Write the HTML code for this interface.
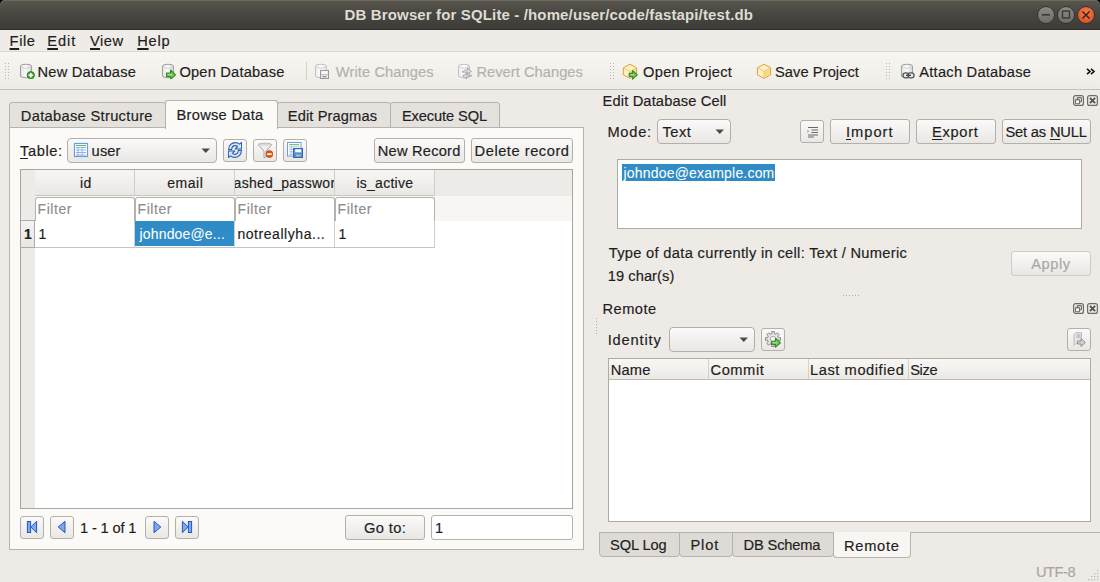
<!DOCTYPE html><html><head><meta charset="utf-8"><style>
html,body{margin:0;padding:0;width:1100px;height:582px;overflow:hidden;background:#eeebe7;}
body{position:relative;font-family:"Liberation Sans",sans-serif;color:#1e1e1e;}
.t{position:absolute;white-space:pre;line-height:15px;letter-spacing:0.35px;-webkit-text-stroke:0.18px currentColor;}
.u{text-decoration:underline;text-decoration-thickness:1.2px;text-underline-offset:2px;}
.um{text-decoration:underline;text-decoration-thickness:1.8px;text-underline-offset:1.5px;}
.btn{position:absolute;box-sizing:border-box;border:1px solid #b3b0ab;border-radius:3px;background:linear-gradient(#fbfaf9,#e9e7e4);}

</style></head><body>
<div style="position:absolute;left:0px;top:0px;width:1100px;height:30px;background:#000"></div>
<div style="position:absolute;left:0px;top:0px;width:1100px;height:30px;background:linear-gradient(#5a574e,#4a4843 40%,#3c3b37);border-radius:5px 5px 0 0;box-shadow:inset 0 1px 0 #6c695f"></div>
<div style="position:absolute;left:0px;top:29px;width:1100px;height:1px;background:#2c2b28"></div>
<div class="t" style="left:344.60px;top:7.39px;font-size:15px;letter-spacing:0.137px;font-weight:bold;color:#dfdbd2;-webkit-text-stroke:0">DB Browser for SQLite - /home/user/code/fastapi/test.db</div>
<div style="position:absolute;left:1037px;top:6px;width:16px;height:16px;border:1px solid #33322e;border-radius:50%;background:linear-gradient(#8b8983,#6f6d67)"></div>
<div style="position:absolute;left:1057px;top:6px;width:16px;height:16px;border:1px solid #33322e;border-radius:50%;background:linear-gradient(#8b8983,#6f6d67)"></div>
<div style="position:absolute;left:1077px;top:6px;width:16px;height:16px;border:1px solid #33322e;border-radius:50%;background:radial-gradient(circle at 50% 35%,#f57a4f,#e5552a 70%,#d94c20)"></div>
<svg style="position:absolute;left:0;top:0" width="1100" height="30"><rect x="1042" y="14" width="8" height="1.6" fill="#3a3935"/><rect x="1062.5" y="11" width="7" height="7" fill="none" stroke="#3a3935" stroke-width="1.4"/><path d="M1082.5 11.5 L1089.5 18.5 M1089.5 11.5 L1082.5 18.5" stroke="#2a2a20" stroke-width="1.5"/></svg>
<div style="position:absolute;left:0px;top:30px;width:1100px;height:21px;background:#efece8"></div>
<div style="position:absolute;left:0px;top:51px;width:1100px;height:1px;background:#dcd9d4"></div>
<div class="t" style="left:9.60px;top:33.95px;font-size:14.67px;letter-spacing:0.600px;"><span class="um">F</span>ile</div>
<div class="t" style="left:47.30px;top:33.95px;font-size:14.67px;letter-spacing:0.900px;"><span class="um">E</span>dit</div>
<div class="t" style="left:90.00px;top:33.95px;font-size:14.67px;letter-spacing:0.533px;"><span class="um">V</span>iew</div>
<div class="t" style="left:137.30px;top:33.95px;font-size:14.67px;letter-spacing:0.700px;"><span class="um">H</span>elp</div>
<div style="position:absolute;left:0px;top:52px;width:1100px;height:37px;background:linear-gradient(#f8f6f2,#efece7)"></div>
<div style="position:absolute;left:0px;top:89px;width:1100px;height:1px;background:#c3c0bb"></div>
<svg style="position:absolute;left:0;top:0" width="1100" height="90"><rect x="5" y="63" width="1" height="1" fill="#b9b6b0"/><rect x="8" y="63" width="1" height="1" fill="#b9b6b0"/><rect x="5" y="66" width="1" height="1" fill="#b9b6b0"/><rect x="8" y="66" width="1" height="1" fill="#b9b6b0"/><rect x="5" y="69" width="1" height="1" fill="#b9b6b0"/><rect x="8" y="69" width="1" height="1" fill="#b9b6b0"/><rect x="5" y="72" width="1" height="1" fill="#b9b6b0"/><rect x="8" y="72" width="1" height="1" fill="#b9b6b0"/><rect x="5" y="75" width="1" height="1" fill="#b9b6b0"/><rect x="8" y="75" width="1" height="1" fill="#b9b6b0"/><rect x="5" y="78" width="1" height="1" fill="#b9b6b0"/><rect x="8" y="78" width="1" height="1" fill="#b9b6b0"/><rect x="610" y="63" width="1" height="1" fill="#b9b6b0"/><rect x="613" y="63" width="1" height="1" fill="#b9b6b0"/><rect x="610" y="66" width="1" height="1" fill="#b9b6b0"/><rect x="613" y="66" width="1" height="1" fill="#b9b6b0"/><rect x="610" y="69" width="1" height="1" fill="#b9b6b0"/><rect x="613" y="69" width="1" height="1" fill="#b9b6b0"/><rect x="610" y="72" width="1" height="1" fill="#b9b6b0"/><rect x="613" y="72" width="1" height="1" fill="#b9b6b0"/><rect x="610" y="75" width="1" height="1" fill="#b9b6b0"/><rect x="613" y="75" width="1" height="1" fill="#b9b6b0"/><rect x="610" y="78" width="1" height="1" fill="#b9b6b0"/><rect x="613" y="78" width="1" height="1" fill="#b9b6b0"/><rect x="886" y="63" width="1" height="1" fill="#b9b6b0"/><rect x="889" y="63" width="1" height="1" fill="#b9b6b0"/><rect x="886" y="66" width="1" height="1" fill="#b9b6b0"/><rect x="889" y="66" width="1" height="1" fill="#b9b6b0"/><rect x="886" y="69" width="1" height="1" fill="#b9b6b0"/><rect x="889" y="69" width="1" height="1" fill="#b9b6b0"/><rect x="886" y="72" width="1" height="1" fill="#b9b6b0"/><rect x="889" y="72" width="1" height="1" fill="#b9b6b0"/><rect x="886" y="75" width="1" height="1" fill="#b9b6b0"/><rect x="889" y="75" width="1" height="1" fill="#b9b6b0"/><rect x="886" y="78" width="1" height="1" fill="#b9b6b0"/><rect x="889" y="78" width="1" height="1" fill="#b9b6b0"/><rect x="306" y="62" width="1" height="18" fill="#d3d0cb"/></svg>
<div class="t" style="left:37.60px;top:64.85px;font-size:14.67px;letter-spacing:0.191px;">New Database</div>
<div class="t" style="left:179.40px;top:64.85px;font-size:14.67px;letter-spacing:0.192px;">Open Database</div>
<div class="t" style="left:335.80px;top:64.85px;font-size:14.67px;letter-spacing:0.100px;color:#b4b1ac;">Write Changes</div>
<div class="t" style="left:476.40px;top:64.85px;font-size:14.67px;letter-spacing:0.046px;color:#b4b1ac;">Revert Changes</div>
<div class="t" style="left:643.00px;top:64.85px;font-size:14.67px;letter-spacing:0.300px;">Open Project</div>
<div class="t" style="left:775.00px;top:64.85px;font-size:14.67px;letter-spacing:0.073px;">Save Project</div>
<div class="t" style="left:919.30px;top:64.85px;font-size:14.67px;letter-spacing:0.236px;">Attach Database</div>
<svg style="position:absolute;left:1086px;top:68px" width="10" height="7"><path d="M1 0.8 L4 3.5 L1 6.2 M5 0.8 L8 3.5 L5 6.2" fill="none" stroke="#111" stroke-width="1.6"/></svg>
<svg width="0" height="0" style="position:absolute"><defs>
<linearGradient id="cyl" x1="0" x2="1" y1="0" y2="0"><stop offset="0" stop-color="#e6e6e6"/><stop offset=".5" stop-color="#fafafa"/><stop offset="1" stop-color="#d8d8d8"/></linearGradient>
<linearGradient id="cylg" x1="0" x2="1" y1="0" y2="0"><stop offset="0" stop-color="#eeeeee"/><stop offset=".5" stop-color="#fbfbfb"/><stop offset="1" stop-color="#e6e6e6"/></linearGradient>
<linearGradient id="btng" x1="0" x2="0" y1="0" y2="1"><stop offset="0" stop-color="#fbfaf9"/><stop offset="1" stop-color="#e8e6e3"/></linearGradient>
</defs></svg>
<svg style="position:absolute;left:19px;top:63px" width="16" height="16" viewBox="0 0 16 16"><path d="M1.5 3.8 Q1.5 1.3 7 1.3 Q12.5 1.3 12.5 3.8 V12.2 Q12.5 14.7 7 14.7 Q1.5 14.7 1.5 12.2 Z" fill="url(#cyl)" stroke="#a2a2a2" stroke-width="1.1"/><path d="M2.3 4.3 Q7 6.6 11.7 4.3" fill="none" stroke="#cfcfcf" stroke-width="0.9"/><circle cx="11.8" cy="12.2" r="3.6" fill="#4aa535" stroke="#2c7f1e" stroke-width="1"/><path d="M11.8 10 V14.4 M9.6 12.2 H14" stroke="#fff" stroke-width="1.6"/></svg>
<svg style="position:absolute;left:161px;top:63px" width="16" height="16" viewBox="0 0 16 16"><path d="M1.5 3.8 Q1.5 1.3 7 1.3 Q12.5 1.3 12.5 3.8 V12.2 Q12.5 14.7 7 14.7 Q1.5 14.7 1.5 12.2 Z" fill="url(#cyl)" stroke="#a2a2a2" stroke-width="1.1"/><path d="M2.3 4.3 Q7 6.6 11.7 4.3" fill="none" stroke="#cfcfcf" stroke-width="0.9"/><path d="M5.5 10 H9.5 V7 L14.5 11.8 L9.5 16.5 V13.6 H5.5 Z" fill="#7cc25a" stroke="#2f8f22" stroke-width="1.1" stroke-linejoin="round"/><path d="M6.8 11.8 H11" stroke="#b9e3a5" stroke-width="1"/></svg>
<svg style="position:absolute;left:314px;top:63px" width="16" height="16" viewBox="0 0 16 16"><path d="M1.5 3.8 Q1.5 1.3 7 1.3 Q12.5 1.3 12.5 3.8 V12.2 Q12.5 14.7 7 14.7 Q1.5 14.7 1.5 12.2 Z" fill="url(#cylg)" stroke="#c4c4c4" stroke-width="1.1"/><path d="M2.3 4.3 Q7 6.6 11.7 4.3" fill="none" stroke="#cfcfcf" stroke-width="0.9"/><rect x="6.5" y="7.5" width="8" height="8" fill="#efefef" stroke="#9a9a9a" stroke-width="1"/><rect x="8" y="8.3" width="5" height="2.6" fill="#fafafa"/><rect x="7" y="11.3" width="7" height="1" fill="#b8b8b8"/><rect x="8.5" y="13" width="4" height="1.4" fill="#9a9a9a"/></svg>
<svg style="position:absolute;left:457px;top:63px" width="16" height="16" viewBox="0 0 16 16"><path d="M1.5 3.8 Q1.5 1.3 7 1.3 Q12.5 1.3 12.5 3.8 V12.2 Q12.5 14.7 7 14.7 Q1.5 14.7 1.5 12.2 Z" fill="url(#cylg)" stroke="#c4c4c4" stroke-width="1.1"/><path d="M2.3 4.3 Q7 6.6 11.7 4.3" fill="none" stroke="#cfcfcf" stroke-width="0.9"/><path d="M5 9 Q7 6.8 10.5 7 V5 L14.5 8.5 L10.5 11 V9.3 Q8 9.3 5 9 Z" fill="#ddd" stroke="#a4a4a4" stroke-width="0.9"/><path d="M15 12.5 Q13 14.2 9.5 14 V16 L5.5 12.8 L9.5 10.5 V12 Q12 12 15 12.5 Z" fill="#ddd" stroke="#a4a4a4" stroke-width="0.9"/></svg>
<svg style="position:absolute;left:622px;top:63px" width="17" height="17" viewBox="0 0 17 17"><path d="M8 1.2 L14.6 4.8 V11.8 L8 15.4 L1.4 11.8 V4.8 Z" fill="#fdf0c4" stroke="#d6a43c" stroke-width="1" stroke-linejoin="round"/><path d="M1.8 5 L8 8.4 L14.2 5 M8 8.4 V15" fill="none" stroke="#e8c268" stroke-width="0.8"/><path d="M8.2 8.6 L14.2 5.2 V11.6 L8.2 15 Z" fill="#f5cf6a" opacity=".7"/><path d="M7.2 10.4 H10.6 V7.6 L15.2 11.9 L10.6 16.2 V13.4 H7.2 Z" fill="#7cc25a" stroke="#2f8f22" stroke-width="1.1" stroke-linejoin="round"/><path d="M8.3 11.9 H12" stroke="#b9e3a5" stroke-width="1"/></svg>
<svg style="position:absolute;left:756px;top:63px" width="16" height="16" viewBox="0 0 16 16"><path d="M8 1.2 L14.6 4.8 V11.8 L8 15.4 L1.4 11.8 V4.8 Z" fill="#fdf0c4" stroke="#d6a43c" stroke-width="1" stroke-linejoin="round"/><path d="M1.8 5 L8 8.4 L14.2 5 M8 8.4 V15" fill="none" stroke="#e8c268" stroke-width="0.8"/><path d="M8.2 8.6 L14.2 5.2 V11.6 L8.2 15 Z" fill="#f5cf6a" opacity=".7"/></svg>
<svg style="position:absolute;left:900px;top:63px" width="16" height="16" viewBox="0 0 16 16"><path d="M1.5 3.8 Q1.5 1.3 7 1.3 Q12.5 1.3 12.5 3.8 V12.2 Q12.5 14.7 7 14.7 Q1.5 14.7 1.5 12.2 Z" fill="url(#cyl)" stroke="#a2a2a2" stroke-width="1.1"/><path d="M2.3 4.3 Q7 6.6 11.7 4.3" fill="none" stroke="#cfcfcf" stroke-width="0.9"/><rect x="3" y="9.8" width="6" height="5" rx="2.4" fill="#e8e8e8" stroke="#555" stroke-width="1.3"/><rect x="8" y="9.8" width="6" height="5" rx="2.4" fill="#e8e8e8" stroke="#555" stroke-width="1.3"/><rect x="6" y="11.6" width="5" height="1.4" fill="#444"/></svg>
<div style="position:absolute;left:9px;top:127px;width:575px;height:423px;box-sizing:border-box;background:#fcfaf7;border:1px solid #b6b3ae"></div>
<div style="position:absolute;box-sizing:border-box;left:9px;top:102px;width:157px;height:26px;background:#e5e2de;border:1px solid #b6b3ae;border-radius:3px 3px 0 0"></div>
<div style="position:absolute;box-sizing:border-box;left:277px;top:102px;width:114px;height:26px;background:#e5e2de;border:1px solid #b6b3ae;border-radius:3px 3px 0 0"></div>
<div style="position:absolute;box-sizing:border-box;left:390px;top:102px;width:110px;height:26px;background:#e5e2de;border:1px solid #b6b3ae;border-radius:3px 3px 0 0"></div>
<div style="position:absolute;box-sizing:border-box;left:165px;top:100px;width:113px;height:29px;background:#fcfaf7;border:1px solid #b6b3ae;border-bottom:none;border-radius:3px 3px 0 0"></div>
<div class="t" style="left:20.80px;top:108.95px;font-size:14.67px;letter-spacing:0.318px;">Database Structure</div>
<div class="t" style="left:176.50px;top:107.95px;font-size:14.67px;letter-spacing:0.280px;">Browse Data</div>
<div class="t" style="left:287.80px;top:108.95px;font-size:14.67px;letter-spacing:0.109px;">Edit Pragmas</div>
<div class="t" style="left:401.90px;top:108.95px;font-size:14.67px;letter-spacing:-0.100px;">Execute SQL</div>
<div class="t" style="left:20.00px;top:143.65px;font-size:14.67px;letter-spacing:0.600px;"><span class="u">T</span>able:</div>
<div class="btn" style="left:67px;top:138px;width:150px;height:25px;border-radius:4px"></div>
<svg style="position:absolute;left:73px;top:142px" width="16" height="16" viewBox="0 0 16 16"><rect x="1.5" y="1.5" width="13" height="13" fill="#fff" stroke="#6c9be0" stroke-width="1.2"/><rect x="3" y="3" width="10" height="1" fill="#62b55c"/><path d="M3 5.5 H13 M3 8 H13 M3 10.5 H13 M3 13 H13 M5 5 V14 M9 5 V14" stroke="#8fb2e6" stroke-width="1"/></svg>
<div class="t" style="left:91.60px;top:143.65px;font-size:14.67px;letter-spacing:0.133px;">user</div>
<svg style="position:absolute;left:201px;top:148px" width="10" height="6"><path d="M0.5 0.5 H9 L4.75 5 Z" fill="#4a4a4a"/></svg>
<div class="btn" style="left:223px;top:139px;width:24px;height:23px"></div>
<div class="btn" style="left:253px;top:139px;width:24px;height:23px"></div>
<div class="btn" style="left:283px;top:139px;width:24px;height:23px"></div>
<svg style="position:absolute;left:228px;top:142px" width="14" height="16" viewBox="0 0 14 16"><path d="M0.6 7.6 C0.6 3.2 3.8 0.6 7.3 0.6 C9.2 0.6 10.6 1.3 11.6 2.2 L13.6 0.4 V7 H7.2 L9.6 4.6 C9 4 8.2 3.6 7.2 3.6 C5.2 3.6 3.9 5.2 3.6 7.6 Z" fill="#d6e5f7" stroke="#2d62b0" stroke-width="1.1" stroke-linejoin="round"/><path d="M0.6 7.6 C0.6 3.2 3.8 0.6 7.3 0.6 C9.2 0.6 10.6 1.3 11.6 2.2 L13.6 0.4 V7 H7.2 L9.6 4.6 C9 4 8.2 3.6 7.2 3.6 C5.2 3.6 3.9 5.2 3.6 7.6 Z" transform="rotate(180 7 8)" fill="#d6e5f7" stroke="#2d62b0" stroke-width="1.1" stroke-linejoin="round"/></svg>
<svg style="position:absolute;left:257px;top:142px" width="16" height="16" viewBox="0 0 16 16"><path d="M1.3 2.8 C1.3 0.8 14.7 0.8 14.7 2.8 L9.2 9 V15 L7 15.6 V9 Z" fill="#efefef" stroke="#a6a6a6" stroke-width="1"/><ellipse cx="8" cy="2.6" rx="5.6" ry="1.2" fill="#d9d9d9"/><circle cx="12.4" cy="12.1" r="3.5" fill="#e05a12" stroke="#b94a0c" stroke-width=".7"/><rect x="10.2" y="11.3" width="4.4" height="1.7" fill="#fff"/></svg>
<svg style="position:absolute;left:287px;top:142px" width="16" height="16" viewBox="0 0 16 16"><rect x="0.5" y="0.5" width="13.5" height="13.5" fill="#fff" stroke="#6e9ee0" stroke-width="1"/><rect x="2.2" y="2.2" width="10" height="1" fill="#5fb55a"/><path d="M2 4.8 H12.5 M2 7.3 H7 M2 9.8 H7 M2 12.3 H7 M4.3 4.5 V13.5" stroke="#a7c3ec" stroke-width="1"/><rect x="6.5" y="6.5" width="9" height="9" fill="#5a8fd8" stroke="#2f66b8" stroke-width="1"/><rect x="8.2" y="7.3" width="6" height="3" fill="#fff"/><rect x="9" y="12.6" width="4.6" height="1.8" fill="#96d67f"/></svg>
<div class="btn" style="left:374px;top:138px;width:91px;height:25px"></div>
<div class="t" style="left:377.80px;top:143.65px;font-size:14.67px;letter-spacing:0.211px;">New Record</div>
<div class="btn" style="left:471px;top:138px;width:102px;height:25px"></div>
<div class="t" style="left:474.60px;top:143.65px;font-size:14.67px;letter-spacing:0.533px;">Delete record</div>
<div style="position:absolute;left:20px;top:169px;width:553px;height:340px;box-sizing:border-box;background:#fff;border:1px solid #a9a6a1"></div>
<div style="position:absolute;left:21px;top:170px;width:14px;height:338px;background:#edebe8"></div>
<div style="position:absolute;left:35px;top:170px;width:537px;height:26px;background:#edebe8"></div>
<div style="position:absolute;left:35px;top:170px;width:400px;height:26px;background:linear-gradient(#f7f6f4,#e9e7e3)"></div>
<div style="position:absolute;left:35px;top:195px;width:400px;height:1px;background:#c9c6c1"></div>
<div style="position:absolute;left:35px;top:196px;width:537px;height:25px;background:#f8f6f3"></div>
<div style="position:absolute;left:134px;top:170px;width:1px;height:26px;background:#d2cfca"></div>
<div style="position:absolute;left:234px;top:170px;width:1px;height:26px;background:#d2cfca"></div>
<div style="position:absolute;left:334px;top:170px;width:1px;height:26px;background:#d2cfca"></div>
<div style="position:absolute;left:434px;top:170px;width:1px;height:26px;background:#d2cfca"></div>
<div style="position:absolute;left:21px;top:220px;width:14px;height:28px;background:linear-gradient(#f4f3f1,#e9e7e4);border-top:1px solid #aeaba6;border-bottom:1px solid #aeaba6;border-right:1px solid #aeaba6;box-sizing:border-box"></div>
<div style="position:absolute;box-sizing:border-box;left:35px;top:197px;width:100px;height:24px;background:#fff;border:1px solid #b5b2ad;border-bottom:none;border-radius:3px 3px 0 0"></div>
<div class="t" style="left:37.60px;top:201.99px;font-size:14px;letter-spacing:0.540px;color:#8e8e8e;">Filter</div>
<div style="position:absolute;box-sizing:border-box;left:135px;top:197px;width:100px;height:24px;background:#fff;border:1px solid #b5b2ad;border-bottom:none;border-radius:3px 3px 0 0"></div>
<div class="t" style="left:137.60px;top:201.99px;font-size:14px;letter-spacing:0.540px;color:#8e8e8e;">Filter</div>
<div style="position:absolute;box-sizing:border-box;left:235px;top:197px;width:100px;height:24px;background:#fff;border:1px solid #b5b2ad;border-bottom:none;border-radius:3px 3px 0 0"></div>
<div class="t" style="left:237.60px;top:201.99px;font-size:14px;letter-spacing:0.540px;color:#8e8e8e;">Filter</div>
<div style="position:absolute;box-sizing:border-box;left:335px;top:197px;width:100px;height:24px;background:#fff;border:1px solid #b5b2ad;border-bottom:none;border-radius:3px 3px 0 0"></div>
<div class="t" style="left:337.60px;top:201.99px;font-size:14px;letter-spacing:0.540px;color:#8e8e8e;">Filter</div>
<div style="position:absolute;left:35px;top:247px;width:400px;height:1px;background:#c4c4c4"></div>
<div style="position:absolute;left:134px;top:221px;width:1px;height:26px;background:#d0d0d0"></div>
<div style="position:absolute;left:234px;top:221px;width:1px;height:26px;background:#d0d0d0"></div>
<div style="position:absolute;left:334px;top:221px;width:1px;height:26px;background:#d0d0d0"></div>
<div style="position:absolute;left:434px;top:221px;width:1px;height:26px;background:#d0d0d0"></div>
<div style="position:absolute;left:135px;top:221px;width:99px;height:25px;background:#308cc6"></div>
<div class="t" style="left:24px;top:226.79px;font-size:14px;font-weight:bold;">1</div>
<div class="t" style="left:38.5px;top:226.79px;font-size:14px;">1</div>
<div class="t" style="left:139.60px;top:226.79px;font-size:14px;letter-spacing:0.155px;color:#fff;-webkit-text-stroke:0.05px #fff">johndoe@e...</div>
<div class="t" style="left:237.40px;top:226.79px;font-size:14px;letter-spacing:0.554px;">notreallyha...</div>
<div class="t" style="left:338.5px;top:226.79px;font-size:14px;">1</div>
<div class="t" style="left:80px;top:175.79px;font-size:14px;">id</div>
<div class="t" style="left:167.20px;top:175.79px;font-size:14px;letter-spacing:0.550px;">email</div>
<div class="t" style="left:356.40px;top:175.79px;font-size:14px;letter-spacing:0.275px;">is_active</div>
<div style="position:absolute;left:235px;top:170px;width:99px;height:25px;overflow:hidden">
<div style="position:absolute;left:-235px;top:-170px;width:1100px;height:300px">
<div class="t" style="left:225.50px;top:175.79px;font-size:14px;letter-spacing:0.286px;">hashed_password</div>
</div></div>
<div class="btn" style="left:20px;top:516px;width:24px;height:23px"></div>
<div class="btn" style="left:50px;top:516px;width:24px;height:23px"></div>
<div class="btn" style="left:145px;top:516px;width:24px;height:23px"></div>
<div class="btn" style="left:175px;top:516px;width:24px;height:23px"></div>
<svg style="position:absolute;left:24px;top:519px" width="16" height="16" viewBox="0 0 16 16"><rect x="3.4" y="2.5" width="3.2" height="11" fill="#7ea8ea" stroke="#2159c4" stroke-width="1"/><path d="M12.6 2.3 V13.7 L6.8 8 Z" fill="#7ea8ea" stroke="#2159c4" stroke-width="1" stroke-linejoin="round"/></svg>
<svg style="position:absolute;left:54px;top:519px" width="16" height="16" viewBox="0 0 16 16"><path d="M11 2.3 V13.7 L4.2 8 Z" fill="#7ea8ea" stroke="#2159c4" stroke-width="1" stroke-linejoin="round"/></svg>
<svg style="position:absolute;left:149px;top:519px" width="16" height="16" viewBox="0 0 16 16"><path d="M5 2.3 V13.7 L11.8 8 Z" fill="#7ea8ea" stroke="#2159c4" stroke-width="1" stroke-linejoin="round"/></svg>
<svg style="position:absolute;left:179px;top:519px" width="16" height="16" viewBox="0 0 16 16"><path d="M3.4 2.3 V13.7 L9.2 8 Z" fill="#7ea8ea" stroke="#2159c4" stroke-width="1" stroke-linejoin="round"/><rect x="9.4" y="2.5" width="3.2" height="11" fill="#7ea8ea" stroke="#2159c4" stroke-width="1"/></svg>
<div class="t" style="left:80.00px;top:520.85px;font-size:14.67px;letter-spacing:-0.156px;">1 - 1 of 1</div>
<div class="btn" style="left:345px;top:515px;width:80px;height:25px"></div>
<div class="t" style="left:364.00px;top:520.85px;font-size:14.67px;letter-spacing:0.380px;">Go to:</div>
<div style="position:absolute;box-sizing:border-box;left:431px;top:515px;width:142px;height:25px;background:#fff;border:1px solid #b5b2ad;border-radius:3px"></div>
<div class="t" style="left:435px;top:520.85px;font-size:14.67px;">1</div>
<div class="t" style="left:602.60px;top:93.85px;font-size:14.67px;letter-spacing:0.141px;">Edit Database Cell</div>
<svg style="position:absolute;left:1072px;top:95px" width="27" height="12"><rect x="1.6" y="0.6" width="9.8" height="9.8" rx="2" fill="none" stroke="#6e6c67" stroke-width="1.2"/><rect x="5.2" y="2.6" width="4.2" height="4.2" rx="0.8" fill="none" stroke="#6e6c67" stroke-width="1.1"/><rect x="3.4" y="4.6" width="4.2" height="4.2" rx="0.8" fill="#f3f1ee" stroke="#6e6c67" stroke-width="1.1"/><rect x="15.6" y="0.6" width="9.8" height="9.8" rx="2" fill="none" stroke="#6e6c67" stroke-width="1.2"/><path d="M17.9 2.9 L23.1 8.1 M23.1 2.9 L17.9 8.1" stroke="#55534e" stroke-width="1.9"/></svg>
<div class="t" style="left:607.40px;top:124.75px;font-size:14.67px;letter-spacing:0.750px;">Mode:</div>
<div class="btn" style="left:657px;top:119px;width:74px;height:25px;border-radius:4px"></div>
<div class="t" style="left:662.40px;top:124.75px;font-size:14.67px;letter-spacing:0.533px;">Text</div>
<svg style="position:absolute;left:715px;top:129px" width="10" height="6"><path d="M0.5 0.5 H9 L4.75 5 Z" fill="#4a4a4a"/></svg>
<div class="btn" style="left:800px;top:120px;width:24px;height:23px"></div>
<svg style="position:absolute;left:804px;top:123px" width="16" height="16" viewBox="0 0 16 16"><path d="M4 4.5 H14 M7.5 7 H14 M7.5 9.5 H14 M4 12 H14 M4 14 H10" stroke="#6a6a6a" stroke-width="1.2"/><path d="M3 6.5 L6 8.2 L3 10 Z" fill="#bdbdbd"/></svg>
<div class="btn" style="left:830px;top:119px;width:80px;height:25px"></div>
<div class="t" style="left:846.00px;top:124.75px;font-size:14.67px;letter-spacing:1.000px;"><span class="u">I</span>mport</div>
<div class="btn" style="left:916px;top:119px;width:80px;height:25px"></div>
<div class="t" style="left:932.00px;top:124.75px;font-size:14.67px;letter-spacing:0.680px;"><span class="u">E</span>xport</div>
<div class="btn" style="left:1002px;top:119px;width:89px;height:25px"></div>
<div class="t" style="left:1005.40px;top:124.75px;font-size:14.67px;letter-spacing:-0.160px;">Set as <span class="u">N</span>ULL</div>
<div style="position:absolute;box-sizing:border-box;left:617px;top:159px;width:465px;height:70px;background:#fff;border:1px solid #aeaba6"></div>
<div style="position:absolute;left:622px;top:164px;width:153px;height:17px;background:#308cc6"></div>
<div class="t" style="left:623.50px;top:165.59px;font-size:14px;letter-spacing:0.194px;color:#fff;-webkit-text-stroke:0.05px #fff">johndoe@example.com</div>
<div class="t" style="left:608.70px;top:245.85px;font-size:14.67px;letter-spacing:0.316px;">Type of data currently in cell: Text / Numeric</div>
<div class="t" style="left:607.70px;top:269.25px;font-size:14.67px;letter-spacing:0.067px;">19 char(s)</div>
<div class="btn" style="left:1011px;top:251px;width:80px;height:25px;border-color:#cfccc7"></div>
<div class="t" style="left:1031.20px;top:256.55px;font-size:14.67px;letter-spacing:0.550px;color:#aaa7a2;">Apply</div>
<svg style="position:absolute;left:843px;top:294px" width="18" height="3"><rect x="0" y="1" width="1" height="1" fill="#aaa"/><rect x="3" y="1" width="1" height="1" fill="#aaa"/><rect x="6" y="1" width="1" height="1" fill="#aaa"/><rect x="9" y="1" width="1" height="1" fill="#aaa"/><rect x="12" y="1" width="1" height="1" fill="#aaa"/><rect x="15" y="1" width="1" height="1" fill="#aaa"/></svg>
<div class="t" style="left:602.40px;top:302.25px;font-size:14.67px;letter-spacing:0.500px;">Remote</div>
<svg style="position:absolute;left:1072px;top:303px" width="27" height="12"><rect x="1.6" y="0.6" width="9.8" height="9.8" rx="2" fill="none" stroke="#6e6c67" stroke-width="1.2"/><rect x="5.2" y="2.6" width="4.2" height="4.2" rx="0.8" fill="none" stroke="#6e6c67" stroke-width="1.1"/><rect x="3.4" y="4.6" width="4.2" height="4.2" rx="0.8" fill="#f3f1ee" stroke="#6e6c67" stroke-width="1.1"/><rect x="15.6" y="0.6" width="9.8" height="9.8" rx="2" fill="none" stroke="#6e6c67" stroke-width="1.2"/><path d="M17.9 2.9 L23.1 8.1 M23.1 2.9 L17.9 8.1" stroke="#55534e" stroke-width="1.9"/></svg>
<svg style="position:absolute;left:596px;top:318px" width="2" height="18"><rect x="0" y="0" width="1" height="1" fill="#b0ada8"/><rect x="0" y="3" width="1" height="1" fill="#b0ada8"/><rect x="0" y="6" width="1" height="1" fill="#b0ada8"/><rect x="0" y="9" width="1" height="1" fill="#b0ada8"/><rect x="0" y="12" width="1" height="1" fill="#b0ada8"/><rect x="0" y="15" width="1" height="1" fill="#b0ada8"/></svg>
<div class="t" style="left:607.70px;top:333.25px;font-size:14.67px;letter-spacing:0.829px;">Identity</div>
<div class="btn" style="left:669px;top:327px;width:86px;height:25px;border-radius:4px"></div>
<svg style="position:absolute;left:739px;top:337px" width="10" height="6"><path d="M0.5 0.5 H9 L4.75 5 Z" fill="#4a4a4a"/></svg>
<div class="btn" style="left:761px;top:328px;width:24px;height:23px"></div>
<svg style="position:absolute;left:765px;top:331px" width="17" height="17" viewBox="0 0 17 17"><path d="M13.17 5.86 L13.47 6.82 L15.48 6.66 L15.48 9.34 L13.47 9.18 L13.17 10.14 L12.70 11.04 L14.24 12.35 L12.35 14.24 L11.04 12.70 L10.14 13.17 L9.18 13.47 L9.34 15.48 L6.66 15.48 L6.82 13.47 L5.86 13.17 L4.96 12.70 L3.65 14.24 L1.76 12.35 L3.30 11.04 L2.83 10.14 L2.53 9.18 L0.52 9.34 L0.52 6.66 L2.53 6.82 L2.83 5.86 L3.30 4.96 L1.76 3.65 L3.65 1.76 L4.96 3.30 L5.86 2.83 L6.82 2.53 L6.66 0.52 L9.34 0.52 L9.18 2.53 L10.14 2.83 L11.04 3.30 L12.35 1.76 L14.24 3.65 L12.70 4.96 Z" fill="#e2e2e2" stroke="#8c8c8c" stroke-width="1" stroke-linejoin="round"/><circle cx="8" cy="8" r="2.6" fill="#fafafa" stroke="#9a9a9a" stroke-width=".8"/><path d="M6.5 10.2 H10.5 V7.2 L15.5 11.8 L10.5 16.2 V13.4 H6.5 Z" fill="#7cc25a" stroke="#2f8f22" stroke-width="1.1" stroke-linejoin="round"/><path d="M7.8 11.8 H12" stroke="#b9e3a5" stroke-width="1"/></svg>
<div class="btn" style="left:1067px;top:328px;width:24px;height:23px"></div>
<svg style="position:absolute;left:1071px;top:331px" width="16" height="16" viewBox="0 0 16 16"><path d="M3 3.5 L5 1.5 H10.5 V12.5 H5 L3 14.5 Z" fill="#e4e4e4" stroke="#b4b4b4" stroke-width=".8"/><path d="M5.5 4 H9.5 M5.5 6 H9.5" stroke="#a8a8a8" stroke-width="1"/><path d="M6.5 10 H10 V7.5 L14.5 11.5 L10 15.5 V13 H6.5 Z" fill="#cfcfcf" stroke="#8a8a8a" stroke-width=".9" stroke-linejoin="round"/></svg>
<div style="position:absolute;box-sizing:border-box;left:608px;top:358px;width:483px;height:164px;background:#fff;border:1px solid #aeaba6"></div>
<div style="position:absolute;left:609px;top:359px;width:481px;height:20px;background:linear-gradient(#f9f7f4,#ece9e5)"></div>
<div style="position:absolute;left:609px;top:379px;width:481px;height:1px;background:#bebbb6"></div>
<div style="position:absolute;left:708px;top:359px;width:1px;height:20px;background:#d4d1cc"></div>
<div style="position:absolute;left:808px;top:359px;width:1px;height:20px;background:#d4d1cc"></div>
<div style="position:absolute;left:908px;top:359px;width:1px;height:20px;background:#d4d1cc"></div>
<div class="t" style="left:610.80px;top:363.25px;font-size:14.67px;letter-spacing:0.167px;">Name</div>
<div class="t" style="left:710.50px;top:363.25px;font-size:14.67px;letter-spacing:0.560px;">Commit</div>
<div class="t" style="left:810.10px;top:363.25px;font-size:14.67px;letter-spacing:0.550px;">Last modified</div>
<div class="t" style="left:910.20px;top:363.25px;font-size:14.67px;letter-spacing:-0.367px;">Size</div>
<div style="position:absolute;left:599px;top:532px;width:501px;height:1px;background:#b6b3ae"></div>
<div style="position:absolute;box-sizing:border-box;left:599px;top:532px;width:81px;height:25px;background:#dedbd7;border:1px solid #b6b3ae;border-radius:0 0 4px 4px"></div>
<div style="position:absolute;box-sizing:border-box;left:679px;top:532px;width:54px;height:25px;background:#dedbd7;border:1px solid #b6b3ae;border-radius:0 0 4px 4px"></div>
<div style="position:absolute;box-sizing:border-box;left:732px;top:532px;width:102px;height:25px;background:#dedbd7;border:1px solid #b6b3ae;border-radius:0 0 4px 4px"></div>
<div style="position:absolute;box-sizing:border-box;left:833px;top:532px;width:78px;height:26px;background:#f8f6f3;border:1px solid #b6b3ae;border-top:none;border-radius:0 0 4px 4px"></div>
<div class="t" style="left:610.00px;top:538.25px;font-size:14.67px;letter-spacing:-0.100px;">SQL Log</div>
<div class="t" style="left:690.40px;top:538.25px;font-size:14.67px;letter-spacing:0.933px;">Plot</div>
<div class="t" style="left:743.60px;top:538.25px;font-size:14.67px;letter-spacing:-0.162px;">DB Schema</div>
<div class="t" style="left:844.00px;top:539.25px;font-size:14.67px;letter-spacing:0.700px;">Remote</div>
<div class="t" style="left:1035.90px;top:565.05px;font-size:14.67px;letter-spacing:-0.450px;color:#a9a6a1;">UTF-8</div>
<svg style="position:absolute;left:1086px;top:568px" width="14" height="14"><rect x="11" y="11" width="1.3" height="1.3" fill="#bdbab5"/><rect x="8" y="11" width="1.3" height="1.3" fill="#bdbab5"/><rect x="5" y="11" width="1.3" height="1.3" fill="#bdbab5"/><rect x="2" y="11" width="1.3" height="1.3" fill="#bdbab5"/><rect x="11" y="8" width="1.3" height="1.3" fill="#bdbab5"/><rect x="8" y="8" width="1.3" height="1.3" fill="#bdbab5"/><rect x="5" y="8" width="1.3" height="1.3" fill="#bdbab5"/><rect x="11" y="5" width="1.3" height="1.3" fill="#bdbab5"/><rect x="8" y="5" width="1.3" height="1.3" fill="#bdbab5"/><rect x="11" y="2" width="1.3" height="1.3" fill="#bdbab5"/></svg>
</body></html>
